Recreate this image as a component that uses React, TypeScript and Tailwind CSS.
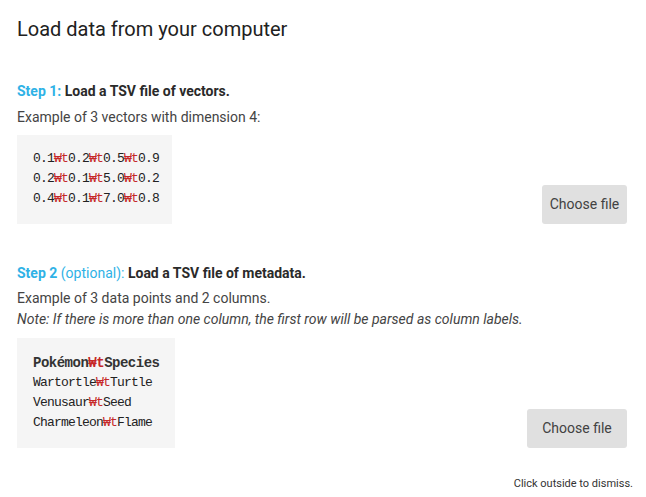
import React from 'react';

const mono = "font-['Liberation_Mono',monospace]";

const Tab = () => <span className="text-[#c62828]">₩t</span>;

const vectors = [
  ['0.1', '0.2', '0.5', '0.9'],
  ['0.2', '0.1', '5.0', '0.2'],
  ['0.4', '0.1', '7.0', '0.8'],
];

const metadata = [
  ['Wartortle', 'Turtle'],
  ['Venusaur', 'Seed'],
  ['Charmeleon', 'Flame'],
];

const Row: React.FC<{ cells: string[] }> = ({ cells }) => (
  <div>
    {cells.map((c, i) => (
      <React.Fragment key={i}>
        {i > 0 && <Tab />}
        {c}
      </React.Fragment>
    ))}
  </div>
);

const ChooseButton: React.FC<{ className?: string }> = ({ className = '' }) => (
  <button
    type="button"
    className={`h-[39px] bg-[#e0e0e0] rounded-[3px] text-[14px] text-[#424242] ${className}`}
  >
    Choose file
  </button>
);

const App: React.FC = () => {
  return (
    <div className="w-[646px] h-[497px] bg-white font-['Roboto',sans-serif] text-[#212121] px-[17px] pt-[15px]">
      <h2 className="text-[20px] leading-[28px] text-[#212121]">Load data from your computer</h2>

      <div className="mt-[39px] text-[14px] leading-[18px] font-bold text-[#2a2a2a]">
        <span className="text-[#2fb2e6]">Step 1:</span> Load a TSV file of vectors.
      </div>
      <div className="mt-[8px] text-[14px] leading-[18px] text-[#444]">Example of 3 vectors with dimension 4:</div>

      <div className="mt-[9px] flex items-end justify-between pr-[2px]">
        <div className={`w-[155px] h-[89px] bg-[#f5f5f5] pl-[16px] pt-[14px] text-[13px] tracking-[-0.8px] leading-[20px] text-[#222] ${mono}`}>
          {vectors.map((r, i) => (
            <Row key={i} cells={r} />
          ))}
        </div>
        <ChooseButton className="w-[85px]" />
      </div>

      <div className="mt-[40px] text-[14px] leading-[18px] font-bold text-[#2a2a2a]">
        <span className="text-[#2fb2e6]">Step 2</span>{' '}
        <span className="text-[#2fb2e6] font-normal">(optional):</span> Load a TSV file of metadata.
      </div>
      <div className="mt-[6px] text-[14px] leading-[21px] text-[#444]">Example of 3 data points and 2 columns.</div>
      <div className="text-[14px] leading-[21px] text-[#444] italic">
        Note: If there is more than one column, the first row will be parsed as column labels.
      </div>

      <div className="mt-[8px] flex items-end justify-between pr-[2px]">
        <div className={`w-[158px] h-[110px] bg-[#f5f5f5] pl-[16px] pt-[15px] text-[13px] tracking-[-0.8px] leading-[20px] text-[#222] ${mono}`}>
          <div className="font-bold text-[14px] tracking-[-0.5px] text-[#333]">
            Pokémon<Tab />Species
          </div>
          {metadata.map((r, i) => (
            <Row key={i} cells={r} />
          ))}
        </div>
        <ChooseButton className="w-[100px]" />
      </div>

      <div className="mt-[29px] text-right text-[11px] leading-[14px] text-[#333] mr-[-4px]">
        Click outside to dismiss.
      </div>
    </div>
  );
};

export default App;
